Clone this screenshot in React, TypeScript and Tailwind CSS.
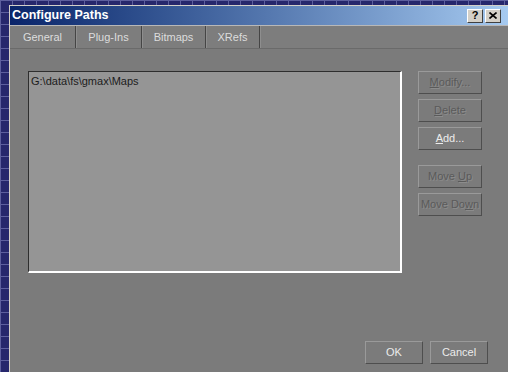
import React from 'react';

const font = { fontFamily: '"Liberation Sans", Arial, sans-serif' };

function Btn({ children, disabled, w = 'w-[64px]' }: { children: React.ReactNode; disabled?: boolean; w?: string }) {
  return (
    <div
      className={`${w} h-[23px] flex items-center justify-center text-[11px] border border-t-[#9a9a9a] border-l-[#9a9a9a] border-r-[#4e4e4e] border-b-[#4e4e4e] ${
        disabled ? 'text-[#5a5a5a] [text-shadow:1px_1px_0_#8c8c8c]' : 'text-[#ececec]'
      }`}
    >
      <span className="whitespace-pre">{children}</span>
    </div>
  );
}

export default function App() {
  const tabs = [
    { label: 'General', w: 'w-[66px]' },
    { label: 'Plug-Ins', w: 'w-[66px]' },
    { label: 'Bitmaps', w: 'w-[64px]' },
    { label: 'XRefs', w: 'w-[54px]' },
  ];

  return (
    <div
      style={font}
      className="w-[508px] h-[372px] overflow-hidden bg-[#26276c] bg-[linear-gradient(to_right,#5d5f9e_1px,transparent_1px),linear-gradient(to_bottom,#5d5f9e_1px,transparent_1px)] bg-[size:12px_12px] pl-[9px] pt-[5px]"
    >
      <div className="w-[499px] h-[367px] border-l border-t border-[#d4d0c8] bg-[#7b7b7b] flex flex-col">
        {/* title bar */}
        <div className="h-[19px] bg-gradient-to-r from-[#0a246a] to-[#a6caf0] flex items-center pl-[2px] pr-[7px]">
          <span className="text-[12.5px] font-bold text-white flex-1">Configure Paths</span>
          <div className="flex gap-[2px]">
            <div className="w-[16px] h-[14px] bg-[#d4d0c8] border border-t-white border-l-white border-r-[#404040] border-b-[#404040] flex items-center justify-center text-[11px] font-bold text-black leading-none">
              ?
            </div>
            <div className="w-[16px] h-[14px] bg-[#d4d0c8] border border-t-white border-l-white border-r-[#404040] border-b-[#404040] flex items-center justify-center">
              <svg width="8" height="7" viewBox="0 0 8 7">
                <path d="M0.5 0.5 L7.5 6.5 M7.5 0.5 L0.5 6.5" stroke="#000" strokeWidth="1.6" />
              </svg>
            </div>
          </div>
        </div>

        {/* tabs */}
        <div className="h-[24px] border-t border-[#b8b8b8] border-b border-b-[#6a6a6a] flex bg-[#7d7d7d]">
          {tabs.map((t) => (
            <div
              key={t.label}
              className={`${t.w} flex items-center justify-center text-[11px] text-[#dcdcdc] border-r border-r-[#454545] shadow-[1px_0_0_#8e8e8e]`}
            >
              {t.label}
            </div>
          ))}
        </div>

        {/* body */}
        <div className="flex-1 flex flex-col pl-[18px] pt-[22px] pr-[20px] pb-[8px]">
          <div className="flex gap-[16px]">
            <div className="w-[374px] h-[202px] bg-[#959595] border border-t-[#2e2e2e] border-l-[#2e2e2e] border-r-white border-b-white border-r-2 border-b-2 px-[2px] pt-[1px]">
              <div className="text-[11px] text-[#1c1c1c]">G:\data\fs\gmax\Maps</div>
            </div>
            <div className="flex flex-col gap-[5px]">
              <Btn disabled>
                <span className="underline">M</span>odify...
              </Btn>
              <Btn disabled>
                <span className="underline">D</span>elete
              </Btn>
              <Btn>
                <span className="underline">A</span>dd...
              </Btn>
              <div className="mt-[10px]">
                <Btn disabled>
                  {'Move '}<span className="underline">U</span>p
                </Btn>
              </div>
              <Btn disabled>
                Move Do<span className="underline">w</span>n
              </Btn>
            </div>
          </div>
          <div className="flex-1" />
          <div className="flex justify-end gap-[7px]">
            <Btn w="w-[58px]">OK</Btn>
            <Btn w="w-[58px]">Cancel</Btn>
          </div>
        </div>
      </div>
    </div>
  );
}
